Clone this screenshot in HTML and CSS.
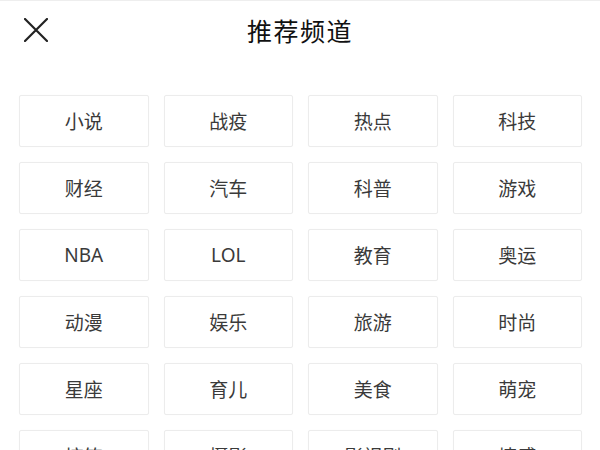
FILE: index.html
```html
<!DOCTYPE html>
<html lang="zh">
<head>
<meta charset="utf-8">
<link rel="stylesheet" href="styles.css">
</head>
<body>
<div class="page">
  <header class="header">
    <button class="close" aria-label="关闭">
      <svg width="24" height="24" viewBox="0 0 24 24"><path d="M1 1L23 23M23 1L1 23" stroke="#222" stroke-width="2.2" fill="none" stroke-linecap="round"/></svg>
    </button>
    <h1 class="title">推荐频道</h1>
  </header>
  <div class="grid">
    <div class="card">小说</div>
    <div class="card">战疫</div>
    <div class="card">热点</div>
    <div class="card">科技</div>
    <div class="card">财经</div>
    <div class="card">汽车</div>
    <div class="card">科普</div>
    <div class="card">游戏</div>
    <div class="card">NBA</div>
    <div class="card">LOL</div>
    <div class="card">教育</div>
    <div class="card">奥运</div>
    <div class="card">动漫</div>
    <div class="card">娱乐</div>
    <div class="card">旅游</div>
    <div class="card">时尚</div>
    <div class="card">星座</div>
    <div class="card">育儿</div>
    <div class="card">美食</div>
    <div class="card">萌宠</div>
    <div class="card">搞笑</div>
    <div class="card">摄影</div>
    <div class="card">影视剧</div>
    <div class="card">情感</div>
  </div>
</div>
</body>
</html>
```
FILE: styles.css
```css
html, body {
  margin: 0;
  padding: 0;
  background: #fff;
}
body {
  font-family: "Noto Sans", "Noto Sans CJK SC", sans-serif;
  color: #333;
  overflow: hidden;
}
.page {
  border-top: 1px solid #eee;
}
.header {
  position: relative;
  height: 59px;
  display: flex;
  align-items: center;
  justify-content: center;
}
.close {
  position: absolute;
  left: 24px;
  top: 17px;
  width: 24px;
  height: 24px;
  padding: 0;
  border: 0;
  background: none;
  display: block;
}
.close svg { display: block; }
.title {
  margin: 0;
  font-size: 25px;
  font-weight: 400;
  color: #111;
  font-family: "Noto Sans CJK SC", sans-serif;
  letter-spacing: 1.5px;
  line-height: 1;
}
.grid {
  margin-top: 35px;
  padding: 0 18px 0 19px;
  display: grid;
  grid-template-columns: repeat(4, 1fr);
  column-gap: 15px;
  row-gap: 15px;
}
.card {
  box-sizing: border-box;
  height: 52px;
  border: 1px solid #ececec;
  border-radius: 2px;
  box-shadow: 0 0 1px rgba(0,0,0,0.04);
  display: flex;
  align-items: center;
  justify-content: center;
  font-size: 19px;
  color: #3a3a3a;
}
```
